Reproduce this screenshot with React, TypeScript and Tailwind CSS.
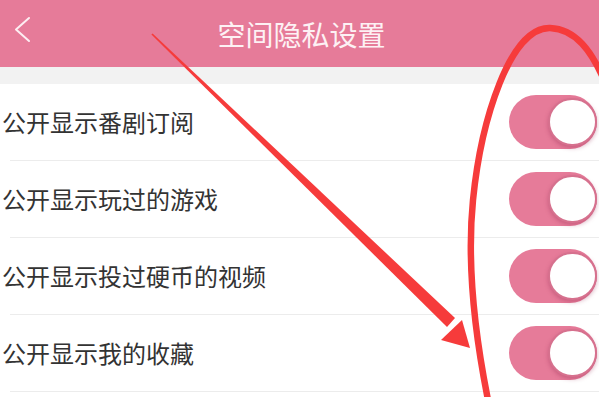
const items = ["公开显示番剧订阅", "公开显示玩过的游戏", "公开显示投过硬币的视频", "公开显示我的收藏"];

function Toggle() {
  return (
    <div className="relative h-[54px] w-[88px] rounded-full bg-[#e67b99]">
      <div className="absolute right-0 top-[3px] h-[48px] w-[49px] rounded-full border-2 border-[#d6718e] bg-white shadow-[0_2px_4px_rgba(150,40,80,0.35)]" />
    </div>
  );
}

function Annotation() {
  return (
    <svg className="pointer-events-none absolute left-0 top-0" width="599" height="397" viewBox="0 0 599 397">
      <path
        d="M 488 400 C 476 340 466 270 473 200 C 481 120 510 27 550 28 C 575 29 592 50 606 85"
        fill="none"
        stroke="#f63b3b"
        strokeWidth="6.5"
        strokeLinecap="round"
      />
      <polygon points="151.4,34.6 152.6,33.4 455,318 447,327" fill="#f63b3b" />
      <polygon points="470,348 441,340 462,320" fill="#f63b3b" />
    </svg>
  );
}

export default function App() {
  return (
    <div className="relative h-[397px] w-[599px] overflow-hidden bg-white" style={{ fontFamily: '"Noto Sans CJK SC", "Noto Sans", sans-serif' }}>
      <div className="relative flex h-[67px] items-center justify-center bg-[#e67b99]">
        <svg className="absolute left-[13px] top-[16px]" width="18" height="27" viewBox="0 0 18 27">
          <polyline points="16,2 3,13.5 16,25" fill="none" stroke="#fdeef2" strokeWidth="2" strokeLinecap="round" strokeLinejoin="round" />
        </svg>
        <span className="pl-[4px] text-[28px] text-[#fdf1f4]">空间隐私设置</span>
      </div>
      <div className="h-[17px] bg-[#f2f2f2]" />
      <div className="flex flex-col">
        {items.map((t) => (
          <div key={t} className="flex flex-col">
            <div className="flex h-[76px] items-center justify-between pl-[2px] pr-[2px]">
              <span className="text-[24px] leading-none text-[#333333]">{t}</span>
              <Toggle />
            </div>
            <div className="ml-[10px] h-px bg-[#ececec]" />
          </div>
        ))}
      </div>
      <Annotation />
    </div>
  );
}
